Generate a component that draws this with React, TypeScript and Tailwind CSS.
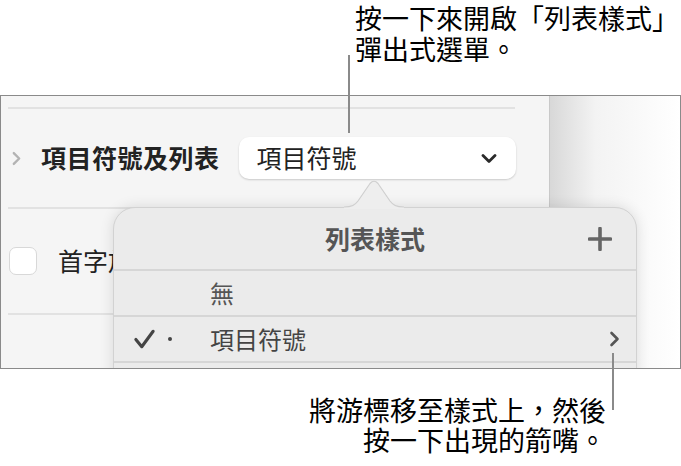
const uiFont = { fontFamily: '"Noto Sans CJK TC", "Noto Sans", sans-serif' };
const noteFont = { fontFamily: '"Liberation Sans", "Noto Sans CJK TC", sans-serif' };

function ChevronRight({ className = "" }: { className?: string }) {
  return (
    <svg viewBox="0 0 10 16" className={className} fill="none" aria-hidden="true">
      <path d="M2 2l6 6-6 6" stroke="currentColor" strokeWidth="2.6" strokeLinecap="round" strokeLinejoin="round" />
    </svg>
  );
}

function BulletRow() {
  return (
    <div className="flex h-[98px] items-center">
      <ChevronRight className="ml-[11px] h-[15px] w-[9px] text-[#b3b3b3]" />
      <span className="ml-[20px] text-[25px] font-bold tracking-[0.5px] text-[#222]">項目符號及列表</span>
      <button className="ml-[19px] flex h-[42px] w-[277px] items-center justify-between rounded-[10px] bg-white pl-[18px] pr-[19px] shadow-[0_1px_2px_rgba(0,0,0,0.18)]">
        <span className="text-[25px] text-[#222]">項目符號</span>
        <svg viewBox="0 0 16 9" className="h-[9px] w-[16px]" fill="none" aria-hidden="true">
          <path d="M2 1.5l6 6 6-6" stroke="#2a2a2a" strokeWidth="2.8" strokeLinecap="round" strokeLinejoin="round" />
        </svg>
      </button>
    </div>
  );
}

function ListStylePopup() {
  return (
    <div className="absolute left-[112px] top-[111px] w-[524px]">
      <div className="h-[220px] rounded-t-[22px] border border-[#d2d2d2] bg-[#ebebeb] shadow-[0_0_14px_rgba(0,0,0,0.12)]">
        <div className="grid h-[61px] grid-cols-[60px_1fr_60px] items-center">
          <span />
          <span className="text-center text-[25px] font-semibold text-[#555]">列表樣式</span>
          <svg viewBox="0 0 24 24" className="ml-[12px] h-[24px] w-[24px]" aria-hidden="true">
            <path d="M12 1.5v21M1.5 12h21" stroke="#666" strokeWidth="3.6" strokeLinecap="round" />
          </svg>
        </div>
        <div className="flex h-[46px] items-center border-t-2 border-[#d6d6d6] pl-[96px]">
          <span className="text-[24px] text-[#555]">無</span>
        </div>
        <div className="flex h-[46px] items-center border-t-2 border-[#d6d6d6]">
          <svg viewBox="0 0 24 22" className="ml-[19px] h-[20px] w-[23px]" fill="none" aria-hidden="true">
            <path d="M2.5 11.5l6.5 8L21.5 2.5" stroke="#444" strokeWidth="3.4" strokeLinecap="round" strokeLinejoin="round" />
          </svg>
          <span className="ml-[12px] h-[4px] w-[4px] rounded-full bg-[#444]" />
          <span className="ml-[38px] text-[24px] text-[#444]">項目符號</span>
          <ChevronRight className="ml-auto mr-[16px] h-[16px] w-[11px] text-[#555]" />
        </div>
        <div className="border-t-2 border-[#d6d6d6]" />
      </div>
      <svg viewBox="0 0 60 29" className="absolute left-[231px] top-[-27px] h-[29px] w-[60px]" aria-hidden="true">
        <path d="M0 27 C8 27 11 25 14 21 L26 3.5 Q30 -1 34 3.5 L46 21 C49 25 52 27 60 27 L60 29 L0 29 Z" fill="#eeeeee" />
        <path d="M0 27 C8 27 11 25 14 21 L26 3.5 Q30 -1 34 3.5 L46 21 C49 25 52 27 60 27" fill="none" stroke="#cfcfcf" strokeWidth="1.2" />
      </svg>
    </div>
  );
}

export default function App() {
  return (
    <div className="relative h-[466px] w-[681px] overflow-hidden bg-white text-black" style={uiFont}>
      <div className="h-[95px] pl-[355px] pt-[5px] text-[27px] leading-[31px]" style={noteFont}>
        <p>按一下來開啟「列表樣式」</p>
        <p>彈出式選單。</p>
      </div>

      <div className="relative flex h-[274px] overflow-hidden border border-[#8a8a8a]">
        <div className="w-[549px] shrink-0 border-r border-[#c9c9c9] bg-[#f5f5f5] pt-[11px]">
          <div className="ml-[7px] h-[2px] w-[507px] bg-[#e2e2e2]" />
          <BulletRow />
          <div className="ml-[7px] h-[2px] bg-[#e2e2e2]" />
          <div className="flex h-[104px] items-center">
            <span className="ml-[8px] h-[28px] w-[28px] rounded-[7px] border border-[#d8d8d8] bg-white" />
            <span className="ml-[21px] text-[25px] text-[#222]">首字放大</span>
          </div>
          <div className="ml-[7px] h-[2px] bg-[#e2e2e2]" />
        </div>
        <div className="flex-1 bg-linear-to-r from-[#d8d8d8] via-[#f3f3f3] via-35% to-white" />
        <ListStylePopup />
      </div>

      <div className="pr-[75px] pt-[28px] text-right text-[27px] leading-[30px]" style={noteFont}>
        <p>將游標移至樣式上，然後</p>
        <p>按一下出現的箭嘴。</p>
      </div>

      <span className="absolute left-[348px] top-[55px] h-[78px] w-[2px] bg-[#8a8a8a]" />
      <span className="absolute left-[612px] top-[353px] h-[57px] w-[2px] bg-[#8a8a8a]" />
    </div>
  );
}
